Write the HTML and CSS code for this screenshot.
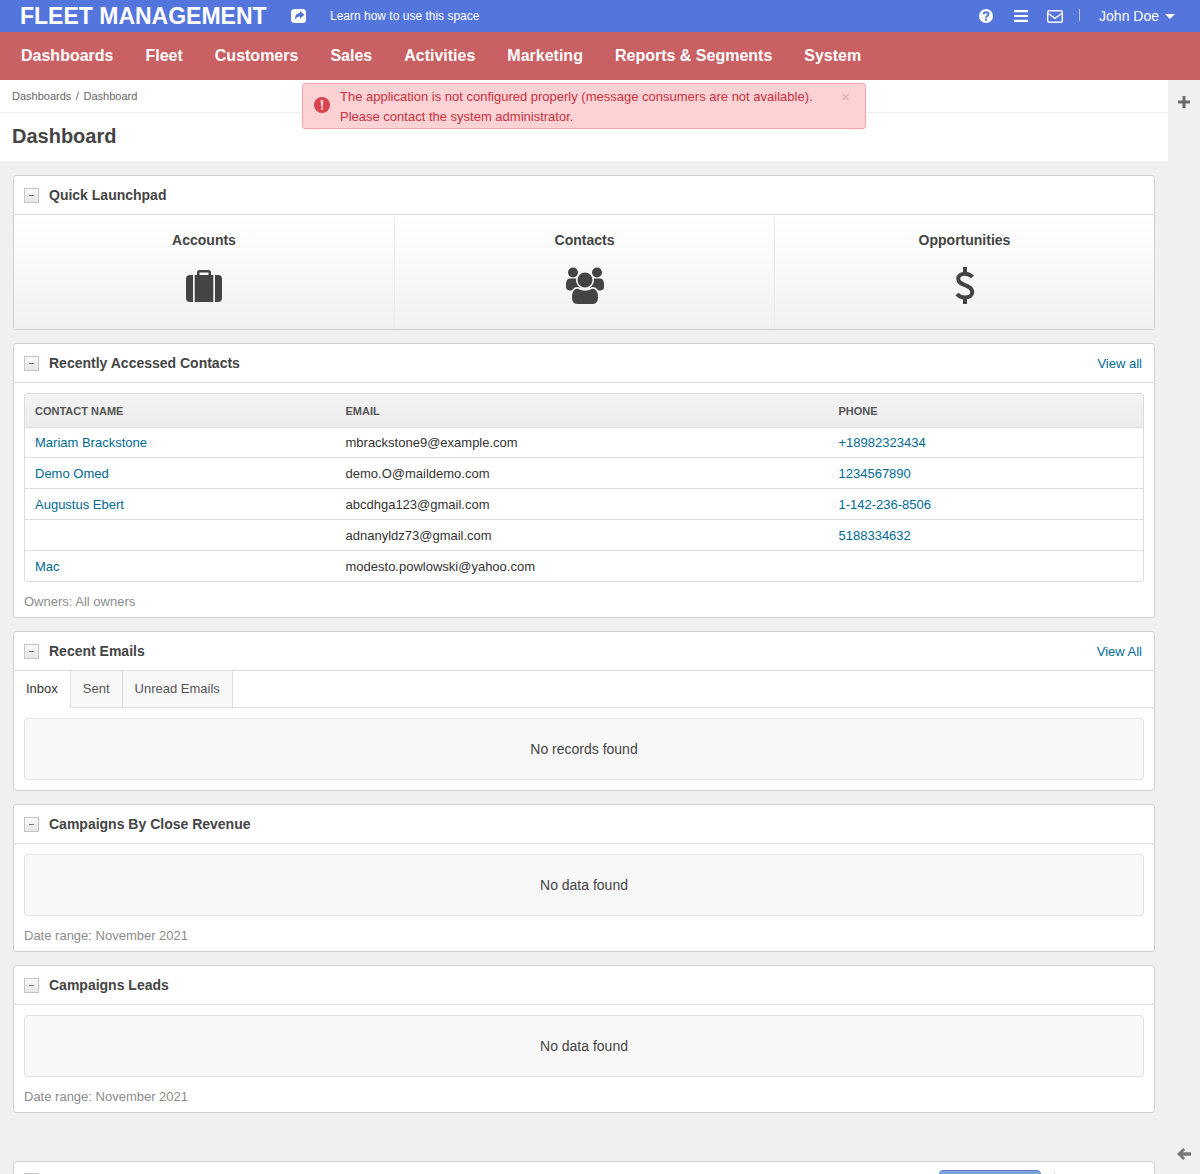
FILE: index.html
```html
<!DOCTYPE html>
<html lang="en">
<head>
    <meta charset="UTF-8" />
    <meta name="viewport" content="width=device-width, initial-scale=1.0" />
    <title>Dashboard</title>
    <link rel="stylesheet" href="styles.css">
</head>
<body>
    <header class="top-bar">
        <a class="brand" href="#">FLEET MANAGEMENT</a>
        <svg class="share-icon" viewBox="0 0 15 14"><rect width="15" height="14" rx="3.500" fill="#fff"/><path fill="#5475dc" d="M9 1.800 13.400 5.800 9 9.800V7.500C6.600 7.500 5.200 8.500 4.500 11 3.300 7.500 5.200 4.300 9 4.100z"/></svg>
        <a class="learn-link" href="#">Learn how to use this space</a>
        <div class="top-actions">
            <svg class="top-icon" viewBox="0 0 14 14"><circle cx="7" cy="7" r="7" fill="#fff"/><path fill="none" stroke="#5475dc" stroke-width="2" d="M4.600 5.400C4.700 4 5.700 3.300 7 3.300c1.400 0 2.400.8 2.400 2 0 1.700-2.400 1.700-2.400 3.400"/><rect x="6" y="9.600" width="2" height="2" fill="#5475dc"/></svg>
            <svg class="top-icon bars" viewBox="0 0 14 12"><path fill="#fff" d="M0 0h14v2.200H0zM0 4.900h14v2.200H0zM0 9.800h14V12H0z"/></svg>
            <svg class="top-icon mail" viewBox="0 0 16 13"><rect x=".7" y=".7" width="14.600" height="11.600" rx="1.500" fill="none" stroke="#fff" stroke-width="1.400"/><path d="M1 3.200 8 8.300l7-5.100" fill="none" stroke="#fff" stroke-width="1.400"/></svg>
            <span class="top-divider"></span>
            <span class="user-name">John Doe</span>
            <span class="caret"></span>
        </div>
    </header>

    <nav class="main-nav">
        <a href="#">Dashboards</a>
        <a href="#">Fleet</a>
        <a href="#">Customers</a>
        <a href="#">Sales</a>
        <a href="#">Activities</a>
        <a href="#">Marketing</a>
        <a href="#">Reports &amp; Segments</a>
        <a href="#">System</a>
    </nav>

    <div class="alert-box">
        <svg class="alert-icon" viewBox="0 0 16 16"><circle cx="8" cy="8" r="8" fill="#d9434e"/><path fill="#fcd2d4" d="M6.600 3h2.800l-.4 6.400H7zM6.900 10.400h2.200v2.300H6.900z"/></svg>
        <p class="alert-text">The application is not configured properly (message consumers are not available).<br>Please contact the system administrator.</p>
        <span class="alert-close">&#10005;</span>
    </div>

    <div class="page-wrap">
        <main class="content">
            <div class="page-head">
                <div class="breadcrumb">Dashboards / Dashboard</div>
                <h1 class="page-title">Dashboard</h1>
            </div>

            <div class="panels">
                <section class="panel">
                    <div class="panel-head">
                        <span class="toggle"></span>
                        <h2>Quick Launchpad</h2>
                    </div>
                    <div class="launchpad">
                        <a class="launch-item" href="#">
                            <span class="launch-label">Accounts</span>
                            <svg class="launch-icon case-icon" width="36" height="32" viewBox="0 0 36 32"><path fill="#444" d="M11 5V2.500A2.500 2.500 0 0 1 13.500 0h9A2.500 2.500 0 0 1 25 2.500V5h-2.500V2.500h-9V5zM8.700 5h18.600v27H8.700zM7 5v27H4a4 4 0 0 1-4-4V9a4 4 0 0 1 4-4zM29 5h3a4 4 0 0 1 4 4v19a4 4 0 0 1-4 4h-3z"/></svg>
                        </a>
                        <a class="launch-item" href="#">
                            <span class="launch-label">Contacts</span>
                            <svg class="launch-icon" width="38" height="37" viewBox="0 0 38 37"><g fill="#444"><circle cx="7" cy="5.500" r="5"/><circle cx="31" cy="5.500" r="5"/><path d="M4 11.500h6c2 0 3 .5 4 1.500v10.500H4c-2.500 0-4-1.300-4-3.500v-3c0-3.500 1.500-5.500 4-5.500zM34 11.500h-6c-2 0-3 .5-4 1.500v10.500h10c2.500 0 4-1.300 4-3.500v-3c0-3.500-1.500-5.500-4-5.500z"/></g><g fill="#444" stroke="#f7f7f7" stroke-width="1.600"><circle cx="19" cy="13" r="8.300"/><path d="M11.500 20.700c2 1.600 4.600 2.300 7.500 2.300s5.500-.7 7.500-2.300c4 .3 6.300 3.800 6.300 9.800 0 4.300-2.300 7.300-5.800 7.300H11c-3.500 0-5.800-3-5.800-7.300 0-6 2.300-9.500 6.300-9.800z"/></g></svg>
                        </a>
                        <a class="launch-item" href="#">
                            <span class="launch-label">Opportunities</span>
                            <svg class="launch-icon" width="20" height="37" viewBox="0 0 20 37"><path fill="none" stroke="#444" stroke-width="4" d="M17.500 10C15.500 7.800 13 6.800 10 6.800c-4 0-6.800 2-6.800 5 0 7.600 14 5 14 13.400 0 3.300-3 5.300-7.200 5.300-3.300 0-6.200-1.300-8-3.500"/><path fill="#444" d="M8 0h4v7H8zM8 30h4v7H8z"/></svg>
                        </a>
                    </div>
                </section>

                <section class="panel">
                    <div class="panel-head">
                        <span class="toggle"></span>
                        <h2>Recently Accessed Contacts</h2>
                        <a class="view-all" href="#">View all</a>
                    </div>
                    <div class="panel-body">
                        <div class="table-box">
                            <table class="contacts">
                                <thead>
                                    <tr><th class="col-name">Contact Name</th><th class="col-email">Email</th><th>Phone</th></tr>
                                </thead>
                                <tbody>
                                    <tr><td><a href="#">Mariam Brackstone</a></td><td>mbrackstone9@example.com</td><td><a href="#">+18982323434</a></td></tr>
                                    <tr><td><a href="#">Demo Omed</a></td><td>demo.O@maildemo.com</td><td><a href="#">1234567890</a></td></tr>
                                    <tr><td><a href="#">Augustus Ebert</a></td><td>abcdhga123@gmail.com</td><td><a href="#">1-142-236-8506</a></td></tr>
                                    <tr><td></td><td>adnanyldz73@gmail.com</td><td><a href="#">5188334632</a></td></tr>
                                    <tr><td><a href="#">Mac</a></td><td>modesto.powlowski@yahoo.com</td><td></td></tr>
                                </tbody>
                            </table>
                        </div>
                        <p class="panel-note">Owners: All owners</p>
                    </div>
                </section>

                <section class="panel">
                    <div class="panel-head">
                        <span class="toggle"></span>
                        <h2>Recent Emails</h2>
                        <a class="view-all" href="#">View All</a>
                    </div>
                    <div class="tabs">
                        <a class="tab active" href="#">Inbox</a>
                        <a class="tab" href="#">Sent</a>
                        <a class="tab" href="#">Unread Emails</a>
                    </div>
                    <div class="panel-body tabs-body">
                        <div class="empty-box">No records found</div>
                    </div>
                </section>

                <section class="panel">
                    <div class="panel-head">
                        <span class="toggle"></span>
                        <h2>Campaigns By Close Revenue</h2>
                    </div>
                    <div class="panel-body">
                        <div class="empty-box">No data found</div>
                        <p class="panel-note">Date range: November 2021</p>
                    </div>
                </section>

                <section class="panel">
                    <div class="panel-head">
                        <span class="toggle"></span>
                        <h2>Campaigns Leads</h2>
                    </div>
                    <div class="panel-body">
                        <div class="empty-box">No data found</div>
                        <p class="panel-note">Date range: November 2021</p>
                    </div>
                </section>

                <section class="panel next-panel">
                    <div class="panel-head">
                        <span class="toggle"></span>
                        <span class="blue-btn"></span>
                        <span class="head-divider"></span>
                    </div>
                </section>
            </div>
        </main>

        <aside class="side-rail">
            <svg class="rail-plus" viewBox="0 0 12 12"><path fill="#6b6b6b" d="M4.500 0h3v4.500H12v3H7.500V12h-3V7.500H0v-3h4.500z"/></svg>
            <svg class="rail-arrow" viewBox="0 0 14 12"><path fill="#787878" d="M6.200 0 8.200 2 5.800 4.200H14v3.600H5.800L8.200 10l-2 2L0 6z"/></svg>
        </aside>
    </div>
</body>
</html>
```

FILE: styles.css
```css
* {
    box-sizing: border-box;
}

html,
body {
    height: 100%;
}

body {
    margin: 0;
    height: 1174px;
    overflow: hidden;
    font-family: "Liberation Sans", Arial, sans-serif;
    font-size: 13px;
    color: #444;
    background-color: #f0f0f0;
    position: relative;
}

a {
    text-decoration: none;
    color: #006a94;
}

h1,
h2,
p {
    margin: 0;
}

.top-bar {
    height: 32px;
    background-color: #5475dc;
    display: flex;
    align-items: center;
    padding-left: 20px;
    color: #fff;
}

.brand {
    color: #fff;
    font-size: 23px;
    font-weight: 700;
    line-height: 32px;
    width: 271px;
}

.share-icon {
    width: 15px;
    height: 14px;
    margin-top: -1px;
}

.learn-link {
    color: #fff;
    font-size: 12px;
    margin-left: 24px;
}

.top-actions {
    margin-left: auto;
    display: flex;
    align-items: center;
    padding-right: 25px;
}

.top-icon {
    display: block;
    width: 14px;
    height: 14px;
}

.top-icon.bars {
    height: 12px;
    margin-left: 21px;
}

.top-icon.mail {
    width: 16px;
    height: 13px;
    margin-left: 19px;
}

.top-divider {
    width: 1px;
    height: 12px;
    background-color: #b9c7f0;
    margin-left: 16px;
    margin-top: -3px;
}

.user-name {
    font-size: 14px;
    margin-left: 19px;
}

.caret {
    width: 0;
    height: 0;
    border-left: 5px solid transparent;
    border-right: 5px solid transparent;
    border-top: 5px solid #fff;
    margin-left: 6px;
}

.main-nav {
    height: 48px;
    background-color: #c96063;
    display: flex;
    align-items: center;
    gap: 32px;
    padding-left: 21px;
}

.main-nav a {
    color: #fff;
    font-size: 16px;
    font-weight: 700;
}

.alert-box {
    position: absolute;
    top: 83px;
    left: 302px;
    width: 564px;
    height: 46px;
    background-color: #fcd2d4;
    border: 1px solid #f5a3a8;
    border-radius: 3px;
    display: flex;
    color: #c9303c;
    z-index: 5;
}

.alert-icon {
    width: 16px;
    height: 16px;
    margin: 13px 0 0 11px;
    flex: none;
}

.alert-text {
    margin: 3px 0 0 10px;
    line-height: 20px;
    font-size: 13px;
    white-space: nowrap;
}

.alert-close {
    position: absolute;
    top: 7px;
    right: 15px;
    font-size: 11px;
    color: #e6b3b5;
    font-weight: 700;
}

.page-wrap {
    display: flex;
    align-items: stretch;
}

.content {
    width: 1168px;
}

.side-rail {
    width: 32px;
    height: 1094px;
    display: flex;
    flex-direction: column;
    align-items: center;
    justify-content: space-between;
    padding: 16px 0 14px;
}

.rail-plus {
    width: 12px;
    height: 12px;
}

.rail-arrow {
    width: 14px;
    height: 12px;
}

.page-head {
    background-color: #fff;
    height: 81px;
}

.breadcrumb {
    height: 33px;
    padding: 10px 12px 0;
    font-size: 11px;
    line-height: 13px;
    word-spacing: 1.500px;
    color: #666;
    border-bottom: 1px solid #f0f0f0;
}

.page-title {
    font-size: 20px;
    font-weight: 700;
    line-height: 24px;
    padding: 11px 12px 0;
    color: #444;
}

.panels {
    padding: 14px 13px 0;
    display: flex;
    flex-direction: column;
    gap: 13px;
}

.panel {
    background-color: #fff;
    border: 1px solid #cfcfcf;
    border-radius: 3px;
}

.panel-head {
    height: 39px;
    border-bottom: 1px solid #dcdcdc;
    display: flex;
    align-items: center;
    padding: 0 12px 0 10px;
}

.panel-head h2 {
    font-size: 14px;
    font-weight: 700;
    color: #444;
    margin-left: 10px;
}

.toggle {
    width: 15px;
    height: 15px;
    border: 1px solid #c4c4c4;
    background: linear-gradient(#fafafa, #e6e6e6);
    position: relative;
    flex: none;
}

.toggle::after {
    content: "";
    position: absolute;
    left: 4px;
    top: 6px;
    width: 5px;
    height: 1px;
    background-color: #777;
}

.view-all {
    margin-left: auto;
}

.launchpad {
    display: grid;
    grid-template-columns: 380px 380px 1fr;
    height: 114px;
}

.launch-item {
    background: linear-gradient(#fff, #f1f1f1);
    border-left: 1px solid #ececec;
    display: flex;
    flex-direction: column;
    align-items: center;
    padding-top: 17px;
    color: #444;
}

.launch-item:first-child {
    border-left: none;
}

.launch-label {
    font-size: 14px;
    font-weight: 700;
    line-height: 16px;
}

.launch-icon {
    margin-top: 19px;
}

.launch-icon.case-icon {
    margin-top: 22px;
}

.panel-body {
    padding: 10px 10px 0;
}

.table-box {
    border: 1px solid #dcdcdc;
    border-radius: 3px;
    overflow: hidden;
}

.contacts {
    width: 100%;
    border-collapse: collapse;
    table-layout: fixed;
}

.contacts th {
    height: 33px;
    padding: 2px 10px 0;
    text-align: left;
    text-transform: uppercase;
    font-size: 11px;
    color: #555;
    background: linear-gradient(#f4f4f4, #ececec);
    border-bottom: 1px solid #dcdcdc;
}

.contacts .col-name {
    width: 310.500px;
}

.contacts .col-email {
    width: 493px;
}

.contacts td {
    height: 31px;
    padding: 1px 10px 0;
    border-top: 1px solid #dcdcdc;
    color: #333;
}

.contacts tbody tr:first-child td {
    border-top: none;
    height: 30px;
    padding-top: 0;
}

.panel-note {
    color: #8c8c8c;
    line-height: 15px;
    padding: 12px 0 8px;
}

.tabs {
    display: flex;
    height: 37px;
    border-bottom: 1px solid #dcdcdc;
}

.tab {
    height: 37px;
    line-height: 35px;
    padding: 0 12px;
    color: #555;
    background-color: #f8f8f8;
    border-right: 1px solid #dcdcdc;
    border-bottom: 1px solid #dcdcdc;
}

.tab.active {
    color: #333;
    background-color: #fff;
    border-bottom-color: #fff;
}

.tabs-body {
    padding-bottom: 10px;
}

.empty-box {
    height: 62px;
    background-color: #f8f8f8;
    border: 1px solid #e2e2e2;
    border-radius: 3px;
    display: flex;
    align-items: center;
    justify-content: center;
    font-size: 14px;
    color: #444;
}

.next-panel {
    margin-top: 35px;
}

.next-panel .panel-head {
    align-items: flex-start;
}

.next-panel .toggle {
    margin-top: 11px;
}

.blue-btn {
    width: 102px;
    height: 30px;
    margin-left: 900px;
    margin-top: 8px;
    border: 1px solid #5c82c8;
    border-radius: 4px;
    background-color: #7ea2e0;
    flex: none;
}

.head-divider {
    width: 1px;
    height: 30px;
    background-color: #ddd;
    margin-left: 13px;
    margin-top: 9px;
}
```
